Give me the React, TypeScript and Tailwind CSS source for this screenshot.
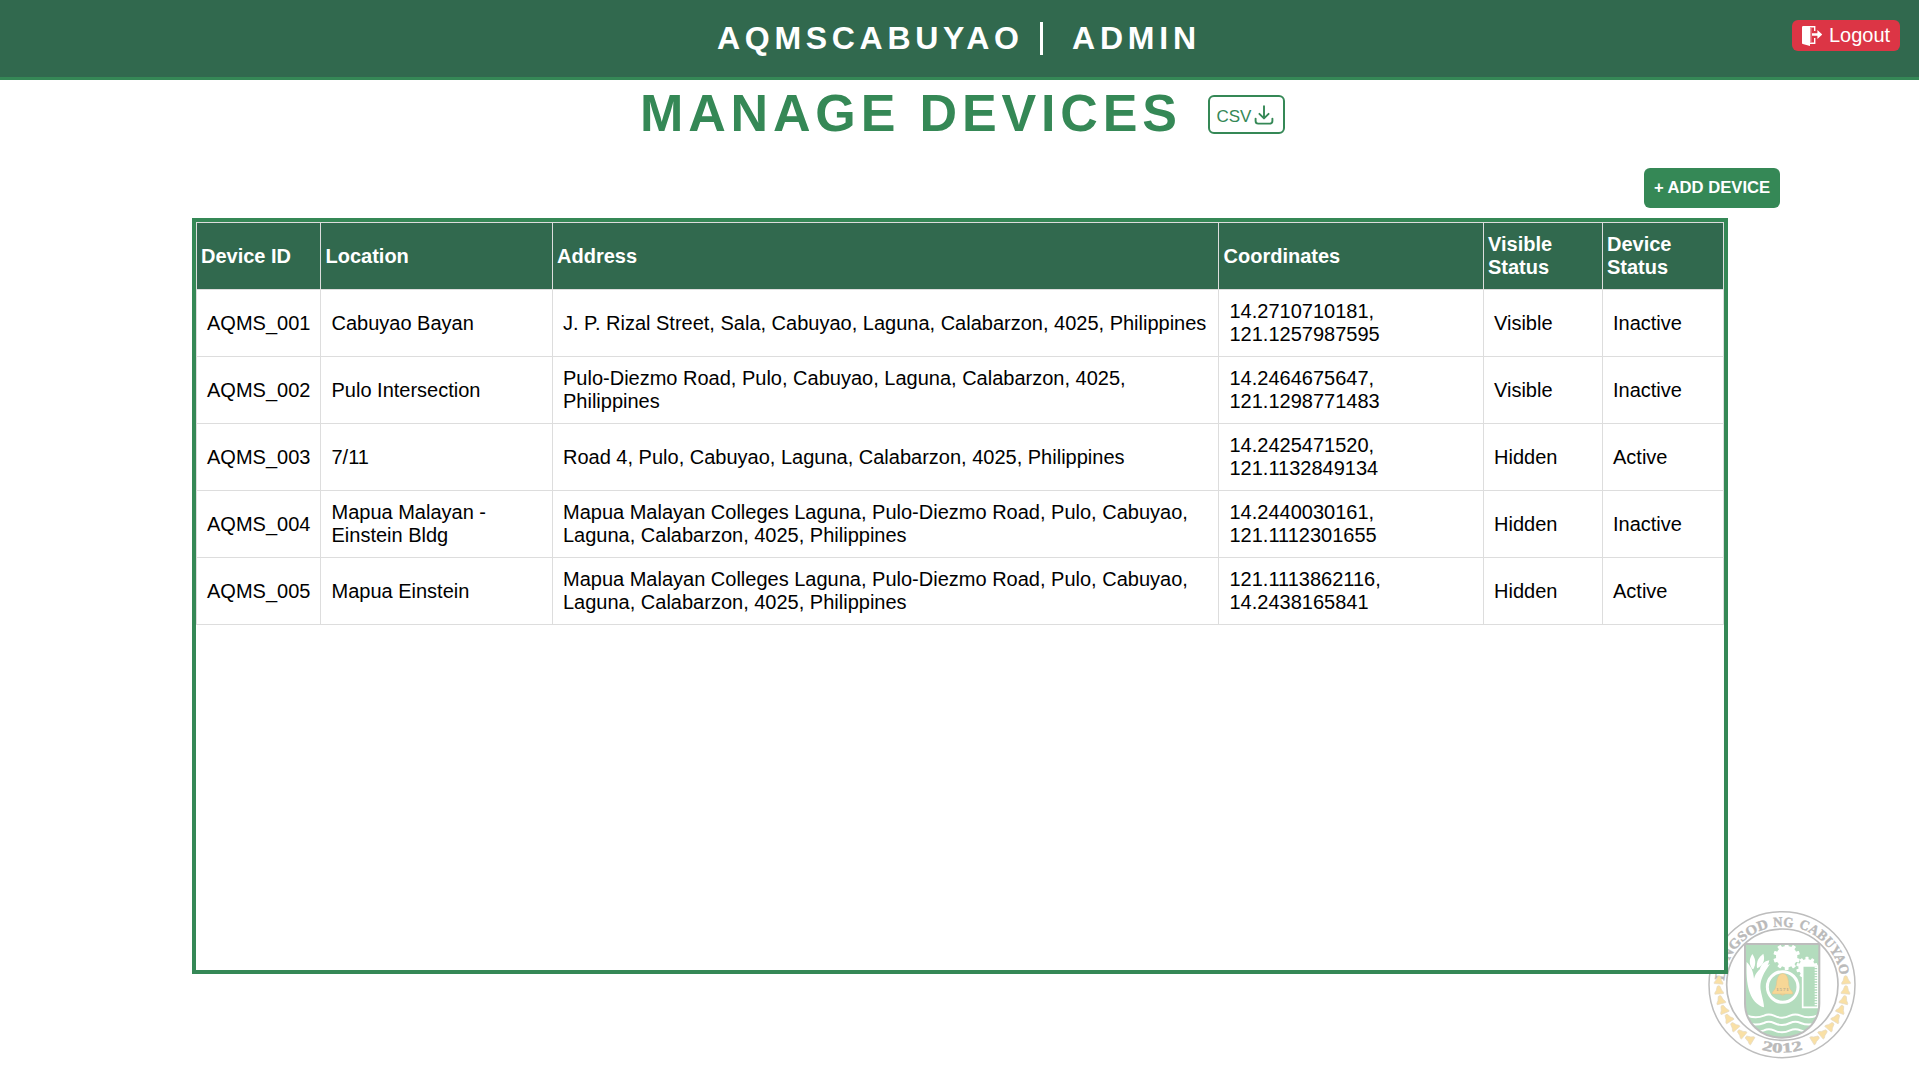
import type { ReactNode } from "react";

const devices = [
  ["AQMS_001", "Cabuyao Bayan", "J. P. Rizal Street, Sala, Cabuyao, Laguna, Calabarzon, 4025, Philippines", "14.2710710181, 121.1257987595", "Visible", "Inactive"],
  ["AQMS_002", "Pulo Intersection", "Pulo-Diezmo Road, Pulo, Cabuyao, Laguna, Calabarzon, 4025, Philippines", "14.2464675647, 121.1298771483", "Visible", "Inactive"],
  ["AQMS_003", "7/11", "Road 4, Pulo, Cabuyao, Laguna, Calabarzon, 4025, Philippines", "14.2425471520, 121.1132849134", "Hidden", "Active"],
  ["AQMS_004", "Mapua Malayan - Einstein Bldg", "Mapua Malayan Colleges Laguna, Pulo-Diezmo Road, Pulo, Cabuyao, Laguna, Calabarzon, 4025, Philippines", "14.2440030161, 121.1112301655", "Hidden", "Inactive"],
  ["AQMS_005", "Mapua Einstein", "Mapua Malayan Colleges Laguna, Pulo-Diezmo Road, Pulo, Cabuyao, Laguna, Calabarzon, 4025, Philippines", "121.1113862116, 14.2438165841", "Hidden", "Active"],
];

const columns = [
  { label: "Device ID", width: "w-[124px]", head: "pl-1", cell: "pl-[10px]" },
  { label: "Location", width: "w-[232px]", head: "pl-[4.5px]", cell: "pl-[10.5px]" },
  { label: "Address", width: "w-[666px]", head: "pl-1", cell: "pl-[10px]" },
  { label: "Coordinates", width: "w-[265px]", head: "pl-[4.5px]", cell: "pl-[10.5px]" },
  { label: "Visible Status", width: "w-[119px]", head: "pl-1", cell: "pl-[10px]" },
  { label: "Device Status", width: "w-[121px]", head: "pl-1", cell: "pl-[10px]" },
];

function LogoutIcon() {
  return (
    <svg viewBox="0 0 20 20" className="size-5" fill="none">
      <path d="M1.2 0H8V20L.8 18Q0 17.8 0 17V1.2Q0 0 1.2 0Z" fill="white" />
      <path d="M7 .8H12.7V5M12.7 12V17.2H8" stroke="white" strokeWidth="1.4" />
      <path d="M8.8 2V16.4" stroke="#f3b9bf" strokeWidth="1" />
      <path d="M10 7.3H15.4V4L20.2 8.5L15.4 13V9.7H10Z" fill="white" />
    </svg>
  );
}

function DownloadIcon() {
  return (
    <svg viewBox="0 0 20 20" className="size-5" fill="none" stroke="currentColor" strokeWidth="1.9" strokeLinecap="round" strokeLinejoin="round">
      <path d="M10 1.2V13M5.4 8.8L10 13.4L14.6 8.8" />
      <path d="M1.6 13.6V16Q1.6 18.6 4.2 18.6H15.8Q18.4 18.6 18.4 16V13.6" />
    </svg>
  );
}

function Gear({ x, y, r }: { x: number; y: number; r: number }) {
  return (
    <g transform={`translate(${x} ${y})`} fill="white">
      <circle r={r} />
      {[0, 36, 72, 108, 144, 180, 216, 252, 288, 324].map((a) => (
        <rect key={a} x={-r * 0.18} y={-r * 1.25} width={r * 0.36} height={r * 0.5} rx="2" transform={`rotate(${a})`} />
      ))}
    </g>
  );
}

function CitySeal() {
  const bells: ReactNode[] = [];
  for (let i = 0; i < 8; i++) {
    const angle = -4 + i * 9;
    const rad = (angle * Math.PI) / 180;
    [-1, 1].forEach((side) => {
      bells.push(
        <path
          key={`${side}-${i}`}
          d="M-4 -12Q0 -15 4 -12L8 0L13 7V11H-13V7L-8 0Z"
          transform={`translate(${277 + side * 191 * Math.cos(rad)} ${254 + 191 * Math.sin(rad)}) rotate(${side * angle})`}
        />,
      );
    });
  }
  return (
    <svg viewBox="0 0 540 510" className="h-[170px] w-[180px]" fill="none">
      <defs>
        <path id="upper-arc" d="M102 254A174 174 0 0 1 450 254" />
        <path id="upper-right-arc" d="M276 77A177 177 0 0 1 453 254" />
        <path id="lower-arc" d="M72 254A204 204 0 0 0 480 254" />
        <clipPath id="shield"><path d="M168 135H385V310C385 366 340 410 276 410C213 410 168 366 168 310Z" /></clipPath>
      </defs>
      <circle cx="276" cy="254" r="219" fill="white" stroke="#bdbdbd" strokeWidth="4.5" />
      <circle cx="277" cy="254" r="167" stroke="#bdbdbd" strokeWidth="5" />
      <g fill="#bababa" stroke="#bababa" strokeWidth="1.2" className="font-['Liberation_Serif',serif] text-[42px] font-bold">
        <text><textPath href="#upper-arc" startOffset="12" textLength="222" lengthAdjust="spacingAndGlyphs">LUNGSOD</textPath></text>
        <text><textPath href="#upper-arc" startOffset="248" textLength="58" lengthAdjust="spacingAndGlyphs">NG</textPath></text>
        <text><textPath href="#upper-right-arc" startOffset="50" textLength="200" lengthAdjust="spacingAndGlyphs">CABUYAO</textPath></text>
        <text><textPath href="#lower-arc" startOffset="258" textLength="126" lengthAdjust="spacingAndGlyphs">2012</textPath></text>
      </g>
      <g fill="#f9e0a6" stroke="#e4d9c3" strokeWidth="2">{bells}</g>
      <path d="M165 132H388V310C388 368 342 413 276 413C211 413 165 368 165 310Z" fill="#b3dcbd" stroke="#bdbdbd" strokeWidth="6" />
      <g clipPath="url(#shield)">
        <g fill="white">
          <path d="M222 322C186 310 166 272 170 186C182 198 190 212 192 236C198 216 208 204 240 192C218 222 208 246 212 270C216 292 222 306 222 322Z" />
          <path d="M186 206C176 190 178 176 187 162C198 178 198 192 190 208Z" />
          <path d="M201 205C198 184 206 172 220 161C226 180 220 196 201 205Z" />
          <path d="M209 210C213 192 222 184 238 181C234 200 226 208 209 210Z" />
        </g>
        <Gear x={290} y={170} r={32} />
        <Gear x={351} y={203} r={26} />
        <path d="M338 198H384V322H338Z" fill="#b3dcbd" stroke="white" strokeWidth="5" />
        <path d="M379 200V318" stroke="white" strokeWidth="10" strokeDasharray="4 4" />
        <circle cx="278" cy="261" r="46" fill="#b3dcbd" stroke="white" strokeWidth="9" />
        {[344, 366, 388].map((y) => (
          <path key={y} d={`M166 ${y}Q194 ${y + 14} 222 ${y + 3}Q236 ${y - 4} 252 ${y + 3}Q276 ${y + 15} 300 ${y + 3}Q316 ${y - 4} 332 ${y + 3}Q358 ${y + 14} 388 ${y}`} stroke="white" strokeWidth="6" />
        ))}
      </g>
      <path d="M270 223Q278 218 286 223Q296 232 296 255Q298 268 308 277V282H247V277Q257 268 259 255Q260 232 270 223ZM271 283H284Q278 289 271 283Z" fill="#f7d796" stroke="#dfc58e" strokeWidth="1.5" />
      <text x="259" y="273" className="font-['Liberation_Serif',serif] text-[15px] font-bold" fill="#b5a98f" textLength="37">1571</text>
    </svg>
  );
}

export default function App() {
  return (
    <div className="relative flex h-[1079px] flex-col overflow-hidden bg-white font-['Liberation_Sans',Arial,sans-serif] text-black">
      <header className="flex h-20 shrink-0 items-center border-b-3 border-[#358856] bg-[#31694e] pl-[717px] text-white">
        <h1 className="w-[323px] pb-0.5 text-[32px] font-bold tracking-[4.7px]">AQMSCABUYAO</h1>
        <span className="h-[33px] w-[3px] bg-white" />
        <span className="ml-[29px] pb-0.5 text-[32px] font-bold tracking-[4.8px]">ADMIN</span>
        <button className="mt-5 mr-[19px] ml-auto flex h-[31px] w-[108px] items-center gap-[7px] self-start rounded-md bg-[#dc3545] pl-[10px] text-[20px]">
          <LogoutIcon />
          <span className="pb-px">Logout</span>
        </button>
      </header>
      <div className="flex h-[88px] shrink-0 pl-[640px] text-[#358856]">
        <h2 className="w-[568px] text-[52px] leading-[67px] font-bold tracking-[4.85px] whitespace-nowrap">MANAGE DEVICES</h2>
        <button className="mt-[15px] flex h-[39px] w-[77px] items-center rounded-md border-2 border-[#358856] pl-[6.5px]">
          <span className="w-[37px] pt-[4px] text-left text-[17px]">CSV</span>
          <DownloadIcon />
        </button>
      </div>
      <div className="flex h-[50px] shrink-0 justify-end pr-[139px]">
        <button className="h-10 w-[136px] rounded-md bg-[#358856] text-[16.64px] leading-[24px] font-bold whitespace-nowrap text-white">+ ADD DEVICE</button>
      </div>
      <main className="relative z-10 ml-[192px] h-[756px] w-[1536px] shrink-0 border-4 border-[#358856] bg-white">
        <table className="w-[1528px] table-fixed border-collapse text-[20px] leading-[23px]">
          <colgroup>
            {columns.map((c) => <col key={c.label} className={c.width} />)}
          </colgroup>
          <thead>
            <tr className="h-[67px] bg-[#31694e] text-left text-white">
              {columns.map((c) => <th key={c.label} className={`border border-[#ddd] pr-1 ${c.head}`}>{c.label}</th>)}
            </tr>
          </thead>
          <tbody>
            {devices.map((row) => (
              <tr key={row[0]} className="h-[67px]">
                {row.map((value, i) => <td key={columns[i].label} className={`border border-[#ddd] pr-[9px] ${columns[i].cell}`}>{value}</td>)}
              </tr>
            ))}
          </tbody>
        </table>
      </main>
      <div className="absolute right-[49px] bottom-[9px]">
        <CitySeal />
      </div>
    </div>
  );
}
